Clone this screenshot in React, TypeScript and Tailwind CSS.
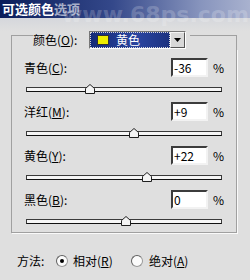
import React from "react";

const rows = [
  { label: "青色", key: "C", value: "-36", n: -36 },
  { label: "洋红", key: "M", value: "+9", n: 9 },
  { label: "黄色", key: "Y", value: "+22", n: 22 },
  { label: "黑色", key: "B", value: "0", n: 0 },
];

function Thumb({ n }: { n: number }) {
  const left = ((n + 100) / 200) * 196 - 4.5;
  return (
    <svg
      width="10"
      height="10"
      viewBox="0 0 10 10"
      className="absolute top-[-4px]"
      style={{ left }}
    >
      <polygon points="0.5,4.5 5,0.5 9.5,4.5 9.5,9.5 0.5,9.5" fill="#f4f4f4" stroke="#202020" strokeWidth="1" />
    </svg>
  );
}

function Slider({ n }: { n: number }) {
  return (
    <div className="relative ml-[2px] mt-[10px] h-[5px] w-[196px] border border-[#3a3a3a] border-b-[#111] bg-[#f6f6f6]">
      <Thumb n={n} />
    </div>
  );
}

function Radio({ checked }: { checked?: boolean }) {
  return (
    <span className="flex h-[12px] w-[12px] items-center justify-center rounded-full border border-[#9a9a9a] border-t-[#606060] border-l-[#606060] bg-[#fbfbfb]">
      {checked && <span className="h-[4px] w-[4px] rounded-full bg-black" />}
    </span>
  );
}

export default function App() {
  return (
    <div
      className="relative h-[280px] w-[250px] overflow-hidden bg-[#dfdfdf] text-[12px] text-black"
      style={{ fontFamily: '"Noto Sans CJK SC", "Noto Sans", sans-serif' }}
    >
      <div className="bg-[linear-gradient(to_bottom,#c7ccd8,#dfdfdf)] h-[31px]">
        <div className="flex h-[18px] items-center bg-[linear-gradient(to_right,#0a1d5a,#34488a_45%,#8794bd_80%,#a9b2cf)] pl-[2px] text-[13px] font-bold text-white">
          可选颜色<span className="text-white/60">选项</span>
        </div>
      </div>

      <div
        className="pointer-events-none absolute left-[62px] top-[4px] text-[22px] font-bold leading-[22px] text-white/20"
        style={{ fontFamily: '"DejaVu Sans", sans-serif' }}
      >
        www.68ps.com
      </div>

      <div className="ml-[11px] w-[226px]">
        <div className="flex h-[18px] items-start">
          <div className="mt-[4px] w-[22px] self-stretch border-l border-t border-[#a0a0a0]" />
          <div className="flex h-[18px] w-[56px] items-center">
            颜色(<span className="underline">O</span>):
          </div>
          <div className="flex h-[18px] w-[97px] border border-[#777] border-b-white border-r-white bg-white">
            <div className="flex flex-1 items-center gap-[7px] border border-dotted border-[#d8d8d8] bg-[linear-gradient(to_right,#152c78,#2a45a0_60%,#1c3280)] pl-[6px] text-white">
              <span className="h-[10px] w-[12px] border border-[#333] bg-[#eeee00]" />
              黄色
            </div>
            <div className="flex w-[15px] items-center justify-center border border-[#f4f4f4] border-b-[#555] border-r-[#555] bg-[#d8d8d8]">
              <svg width="7" height="4" viewBox="0 0 7 4">
                <polygon points="0,0 7,0 3.5,4" fill="#000" />
              </svg>
            </div>
          </div>
          <div className="ml-[4px] mt-[4px] flex-1 self-stretch border-r border-t border-[#a0a0a0]" />
        </div>

        <div className="h-[184px] border-b border-l border-r border-[#a0a0a0] pl-[12px] pr-[14px] pt-[9px] shadow-[1px_1px_0_#fafafa]">
          {rows.map((r) => (
            <div key={r.key} className="h-[44px]">
              <div className="flex h-[19px] items-center">
                <div className="flex-1">
                  {r.label}(<span className="underline">{r.key}</span>):
                </div>
                <div className="flex h-[19px] w-[37px] items-center border-2 border-[#3c3c3c] border-b-[#f2f2f2] border-r-[#f2f2f2] bg-white pl-[1px]">
                  {r.value}
                </div>
                <div className="ml-[5px] w-[9px]">%</div>
              </div>
              <Slider n={r.n} />
            </div>
          ))}
        </div>
      </div>

      <div className="ml-[17px] mt-[20px] flex h-[16px] items-center">
        <span className="w-[39px]">方法:</span>
        <Radio checked />
        <span className="ml-[5px] w-[58px]">
          相对(<span className="underline">R</span>)
        </span>
        <Radio />
        <span className="ml-[6px]">
          绝对(<span className="underline">A</span>)
        </span>
      </div>
    </div>
  );
}
